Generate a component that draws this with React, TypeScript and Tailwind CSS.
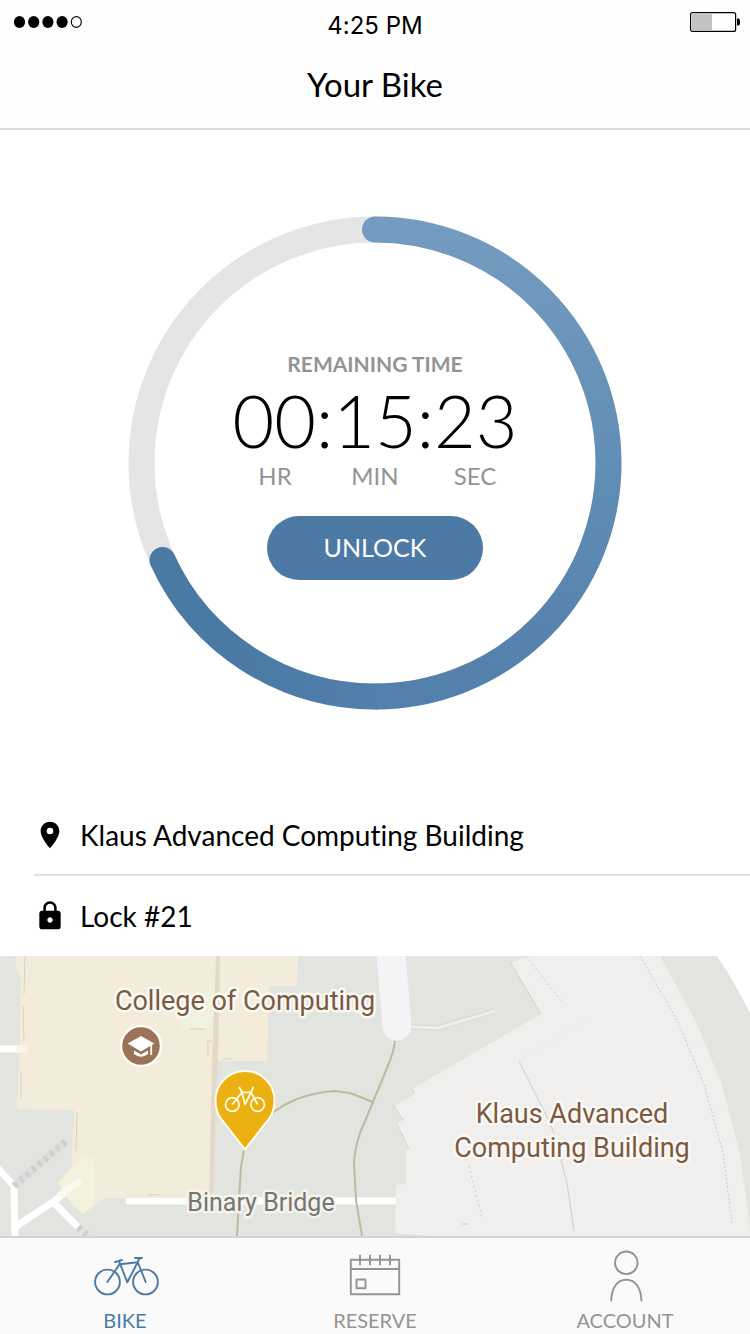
import type { ReactNode } from "react";
import { MdLocationOn, MdLock } from "react-icons/md";

const lato = "font-['Lato','Liberation_Sans',sans-serif]";

function StatusBar() {
  return (
    <div className="grid h-[52px] grid-cols-[1fr_auto_1fr] px-[10px]">
      <svg className="mt-4 ml-1 h-3 w-[68px]" viewBox="0 0 68 12" role="img" aria-label="Signal strength">
        {[5.5, 19.7, 33.9, 48.1].map((x) => (
          <ellipse key={x} cx={x} cy="6" rx="5.6" ry="6" fill="#000" />
        ))}
        <ellipse cx="62.3" cy="6" rx="5" ry="5.4" fill="none" stroke="#000" strokeWidth="1.1" />
      </svg>
      <span className="self-center font-['Inter','Liberation_Sans',sans-serif] text-2xl leading-8">4:25 PM</span>
      <svg className="mt-3 h-5 w-[50px] justify-self-end" viewBox="0 0 50 20" role="img" aria-label="Battery">
        <rect x="0.6" y="0.6" width="45" height="18.8" rx="2" fill="#fff" stroke="#000" strokeWidth="1.2" />
        <rect x="2" y="2" width="20" height="16" fill="#c2c2c2" />
        <path d="M47 6.5h1.5q1.5 0 1.5 3.5t-1.5 3.5H47z" fill="#000" />
      </svg>
    </div>
  );
}

function Timer() {
  return (
    <section className="flex justify-center py-[86px]">
      <div className="relative size-[494px]">
        <svg className="block size-full" viewBox="0 0 494 494" fill="none" strokeWidth="26" aria-hidden="true">
          <defs>
            <linearGradient id="ringRight" gradientUnits="userSpaceOnUse" x1="0" y1="0" x2="0" y2="494">
              <stop offset="0" stopColor="#759cc0" />
              <stop offset="0.5" stopColor="#618eb5" />
              <stop offset="1" stopColor="#527fab" />
            </linearGradient>
            <linearGradient id="ringLeft" gradientUnits="userSpaceOnUse" x1="247" y1="0" x2="100" y2="0">
              <stop offset="0" stopColor="#527fab" />
              <stop offset="1" stopColor="#4a79a4" />
            </linearGradient>
          </defs>
          <circle cx="247" cy="247" r="233.5" stroke="#e5e5e5" />
          <path d="M248 480.5A233.5 233.5 0 0 1 34.5 344" stroke="url(#ringLeft)" strokeLinecap="round" />
          <path d="M247 13.5A233.5 233.5 0 0 1 247 480.5" stroke="url(#ringRight)" />
          <path d="M247 0.5a13 13 0 0 0 0 26z" fill="#759cc0" stroke="none" />
        </svg>
        <div className="absolute inset-0 flex flex-col items-center justify-center pt-[2px]">
          <h2 className="text-[21px] leading-8 font-bold text-[#949494]">REMAINING TIME</h2>
          <p className="text-[72px] leading-[80px] font-light">00:15:23</p>
          <div className="grid w-[300px] grid-cols-3 text-center text-2xl leading-8 text-[#949494]">
            <span>HR</span>
            <span>MIN</span>
            <span>SEC</span>
          </div>
          <button type="button" className="mt-6 h-16 w-[216px] rounded-full bg-[#4c7aa5] text-[25px] text-white">
            UNLOCK
          </button>
        </div>
      </div>
    </section>
  );
}

function CampusMap() {
  return (
    <svg
      className="block h-[280px] w-full bg-[#e2e4df]"
      viewBox="0 0 750 280"
      preserveAspectRatio="xMidYMid slice"
      fill="none"
      role="img"
      aria-label="Map of the bike location"
    >
      <g stroke="#fff" strokeWidth="7" strokeLinecap="round" strokeLinejoin="round">
        <path d="M-5 93H25M-5 209L14 230L15 285M15 271L53 246L78 226M53 246L77 270" />
        <path d="M129 245H397" />
      </g>
      <g stroke="#cfd0d0" strokeWidth="7">
        <path d="M14 230L66 185" strokeDasharray="4 4" />
        <path d="M78 271L92 284" strokeDasharray="4 4" />
      </g>
      <path d="M14 230L66 185" stroke="#dcdddc" strokeWidth="7" strokeDasharray="4 4" strokeDashoffset="4" />

      <path
        d="M16 0H298L297 30H269L267 105H216L210 242H105L94 250L83 258L72 240V201L74 154L17 153L20 94L21 21L16 11Z"
        fill="#f4ecdb"
      />
      <path d="M216 0H220L218 105L216 140L213 240H209L212 110Z" fill="#e2d9c8" />
      <path d="M180 53L202 37L213 28V68H209V73H180Z" fill="#f1f1de" />
      <path d="M25 0L24 38M23 50L24 85M21 115V143M77 156L76 195M147 239H161M190 73H205M212 85H208V100M222 103H232" stroke="#d8cfbe" />
      <path d="M83 201L92 202L94 207V248L83 258L71 247L58 226L72 211Z" fill="#f3f2dd" />
      <path d="M61 238L78 226" stroke="#fbfaee" strokeWidth="7" strokeLinecap="round" />
      <path d="M20 93H25" stroke="#faf5e9" strokeWidth="7" strokeLinecap="round" />

      <path d="M390 -14L397 70" stroke="#f5f3f5" strokeWidth="29" strokeLinecap="round" />
      <path d="M411 71L438 72L494 55" stroke="#d6d6da" strokeWidth="5" />
      <path d="M411 71L438 72L495 55" stroke="#efeeee" strokeWidth="3" />

      <g stroke="#bcbaa0" strokeWidth="2">
        <path d="M395 85Q394 96 387 112L373 146L360 177Q355 192 354 206L356 244L362 280" />
        <path d="M373 146L350 137L335 135Q316 136 297 143Q283 149 272 157" />
        <path d="M244 194L241 211L239 244L237 280" />
      </g>

      <path
        d="M527 0L511 7L541 58L412 133L415 138L394 150L403 164L397 168L409 193L406 194V228L396 229L395 277L433 280H750L749 262L739 193L721 126L695 64L660 0Z"
        fill="#f0efed"
      />
      <path d="M717 0Q735 27 750 57V0Z" fill="#fff" />
      <g stroke="#c9c9c8">
        <path d="M519 105L547 161L554 177L567 227L574 275" stroke="#cbcbca" />
        <path d="M640 0L678 66L705 131L723 197L732 267" strokeDasharray="2 2" />
        <path d="M526 0L562 46M469 210L482 262" strokeDasharray="2 3" />
        <path d="M511 7L541 58M412 133L415 138M394 150L403 164M397 168L409 193" strokeDasharray="2 1" />
        <path d="M519 104L592 62" stroke="#e4e4e2" strokeDasharray="2 3" />
        <path d="M462 268H469" />
      </g>

      <circle cx="141" cy="90" r="20" fill="#9b7356" stroke="#fffdf8" strokeWidth="2.5" />
      <path d="M127.7 87.5L141 80L154.3 87.5L141 95.5Z" fill="#fff" />
      <path d="M151.2 88V99" stroke="#fff" strokeWidth="1.8" />
      <path d="M134 94.5L141 98.5L148 94.5V98Q141 103.5 134 98Z" fill="#fff" />

      <path
        d="M245 193.5L220.5 162Q215.5 155 215.5 144.5A29.5 29.5 0 0 1 274.5 144.5Q274.5 155 269.5 162Z"
        fill="#ebb111"
        stroke="#fffdf0"
        strokeWidth="2"
        strokeLinejoin="round"
      />
      <g stroke="#fffbe8" strokeWidth="1.8" strokeLinejoin="round">
        <circle cx="232.3" cy="148.5" r="6.8" />
        <circle cx="257.6" cy="148.5" r="6.8" />
        <path d="M232.3 148.5L242 136.3L245 148.5L251 136.3H242L239 130.8M257.6 148.5L251 136.3L253.4 130.8" />
      </g>

      <g
        className="font-['Roboto','Liberation_Sans',sans-serif] text-[27px]"
        textAnchor="middle"
        stroke="#fcf8f4"
        strokeWidth="5"
        strokeLinejoin="round"
        paintOrder="stroke"
        fill="#7b5a43"
      >
        <text x="245" y="54">College of Computing</text>
        <text x="572" y="167">Klaus Advanced</text>
        <text x="572" y="201">Computing Building</text>
        <text x="261" y="255" className="text-[25px]" fill="#78756a" stroke="#f3f3f0">Binary Bridge</text>
      </g>
    </svg>
  );
}

function TabIcon({ children }: { children: ReactNode }) {
  return (
    <svg className="h-14 w-[72px]" viewBox="0 0 72 56" fill="none" stroke="currentColor" strokeWidth="1.9" strokeLinecap="round" strokeLinejoin="round" aria-hidden="true">
      {children}
    </svg>
  );
}

function Tab({ label, active = false, children }: { label: string; active?: boolean; children: ReactNode }) {
  return (
    <a
      href="#"
      aria-current={active ? "page" : undefined}
      className={`flex flex-1 flex-col items-center gap-1 pt-[10px] pb-[2px] ${active ? "text-[#4c7aa5]" : "text-[#949494]"}`}
    >
      <TabIcon>{children}</TabIcon>
      <span className="text-xl leading-6">{label}</span>
    </a>
  );
}

export default function App() {
  return (
    <div className={`flex min-h-screen flex-col bg-white text-black [font-variant-ligatures:none] ${lato}`}>
      <header className="border-b-2 border-[#d9d9d9] bg-[#fefefe] pb-3">
        <StatusBar />
        <h1 className="text-center text-[33px] leading-[64px]">Your Bike</h1>
      </header>
      <main className="flex-1">
        <Timer />
        <ul className="text-[28px]">
          <li className="ml-[34px] flex h-20 items-center gap-[14px] border-b-2 border-[#dfdfdf]">
            <MdLocationOn className="size-8" aria-hidden="true" />
            Klaus Advanced Computing Building
          </li>
          <li className="ml-[34px] flex h-20 items-center gap-[14px]">
            <MdLock className="size-8" aria-hidden="true" />
            Lock #21
          </li>
        </ul>
        <CampusMap />
      </main>
      <nav className="flex border-t-2 border-[#d2d3d2] bg-[#fafafa]">
        <Tab label="BIKE" active>
          <circle cx="18.5" cy="34" r="12.4" />
          <circle cx="56.5" cy="34" r="12.4" />
          <path d="M18.3 34L31 15.6L38.3 34.3L48.7 14.3L31 16.3L30 12.7M26 14L33 12M56.7 34L48.7 14L50.7 10M46 10H53" />
        </Tab>
        <Tab label="RESERVE">
          <path d="M11.8 11.8H60.2V46.2H11.8ZM11.8 21H60.2M21 7.5V16.5M31 7.5V16.5M41 7.5V16.5M51 7.5V16.5M17.5 31.5H26.5V40.3H17.5Z" />
        </Tab>
        <Tab label="ACCOUNT">
          <circle cx="37.3" cy="14.8" r="11.3" />
          <path d="M22.2 52.5C22.6 40 28 31.8 37.3 31.8S52 40 52.4 52.5" />
        </Tab>
      </nav>
    </div>
  );
}
